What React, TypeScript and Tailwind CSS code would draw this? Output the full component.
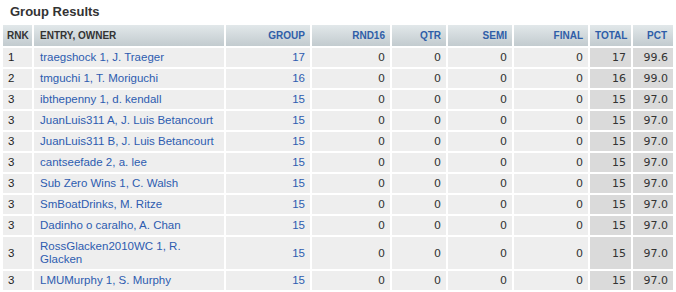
const rows = [
  { rnk: "1", entry: "traegshock 1, J. Traeger", group: 17, total: 17, pct: "99.6" },
  { rnk: "2", entry: "tmguchi 1, T. Moriguchi", group: 16, total: 16, pct: "99.0" },
  { rnk: "3", entry: "ibthepenny 1, d. kendall", group: 15, total: 15, pct: "97.0" },
  { rnk: "3", entry: "JuanLuis311 A, J. Luis Betancourt", group: 15, total: 15, pct: "97.0" },
  { rnk: "3", entry: "JuanLuis311 B, J. Luis Betancourt", group: 15, total: 15, pct: "97.0" },
  { rnk: "3", entry: "cantseefade 2, a. lee", group: 15, total: 15, pct: "97.0" },
  { rnk: "3", entry: "Sub Zero Wins 1, C. Walsh", group: 15, total: 15, pct: "97.0" },
  { rnk: "3", entry: "SmBoatDrinks, M. Ritze", group: 15, total: 15, pct: "97.0" },
  { rnk: "3", entry: "Dadinho o caralho, A. Chan", group: 15, total: 15, pct: "97.0" },
  { rnk: "3", entry: "RossGlacken2010WC 1, R. Glacken", group: 15, total: 15, pct: "97.0" },
  { rnk: "3", entry: "LMUMurphy 1, S. Murphy", group: 15, total: 15, pct: "97.0" },
];

const helv = "font-['Liberation_Sans',Arial,sans-serif]";
const verd = "font-['DejaVu_Sans',Verdana,sans-serif]";

const th =
  "h-[21px] px-[5px] py-0 text-[10px] font-bold leading-[12px] bg-gradient-to-b from-[#e2e8ea] to-[#c2cbcf]";
const td = "h-[19px] py-[3px] leading-[13px] align-middle";

export default function App() {
  return (
    <div className={`w-[676px] h-[292px] overflow-hidden bg-white ${helv}`}>
      <div className="pl-[10px] pt-[4px] mb-[3px] text-[13px] font-bold leading-[16px] text-[#333]">
        Group Results
      </div>
      <table className="ml-[1px] table-fixed border-separate border-spacing-[2px] w-[674px]">
        <colgroup>
          <col className="w-[29px]" />
          <col className="w-[190px]" />
          <col className="w-[84px]" />
          <col className="w-[78px]" />
          <col className="w-[54px]" />
          <col className="w-[64px]" />
          <col className="w-[74px]" />
          <col className="w-[41px]" />
          <col className="w-[40px]" />
        </colgroup>
        <thead>
          <tr>
            <th className={`${th} text-left pl-[4px] text-[#333]`}>RNK</th>
            <th className={`${th} text-left pl-[6px] text-[#333]`}>ENTRY, OWNER</th>
            <th className={`${th} text-right text-[#2f5ea8]`}>GROUP</th>
            <th className={`${th} text-right text-[#2f5ea8]`}>RND16</th>
            <th className={`${th} text-right text-[#2f5ea8]`}>QTR</th>
            <th className={`${th} text-right text-[#2f5ea8]`}>SEMI</th>
            <th className={`${th} text-right text-[#2f5ea8]`}>FINAL</th>
            <th className={`${th} text-right text-[#2f5ea8]`}>TOTAL</th>
            <th className={`${th} text-right pr-[6px] text-[#2f5ea8]`}>PCT</th>
          </tr>
        </thead>
        <tbody>
          {rows.map((r, i) => (
            <tr key={i}>
              <td className={`${td} bg-[#eeeeee] pl-[5px] text-[11.5px] text-[#222]`}>{r.rnk}</td>
              <td className={`${td} bg-[#eeeeee] px-[6px] text-[11.5px]`}>
                <a className="text-[#2d5cb0]">{r.entry}</a>
              </td>
              <td className={`${td} bg-[#eeeeee] pr-[5px] text-right text-[11.5px]`}>
                <a className="text-[#2d5cb0]">{r.group}</a>
              </td>
              <td className={`${td} bg-[#eeeeee] pr-[5px] text-right text-[11px] text-[#333] ${verd}`}>0</td>
              <td className={`${td} bg-[#eeeeee] pr-[5px] text-right text-[11px] text-[#333] ${verd}`}>0</td>
              <td className={`${td} bg-[#eeeeee] pr-[5px] text-right text-[11px] text-[#333] ${verd}`}>0</td>
              <td className={`${td} bg-[#eeeeee] pr-[5px] text-right text-[11px] text-[#333] ${verd}`}>0</td>
              <td className={`${td} bg-[#dadada] pr-[5px] text-right text-[11px] text-[#333] ${verd}`}>{r.total}</td>
              <td className={`${td} bg-[#dadada] pr-[5px] text-right text-[11px] text-[#333] ${verd}`}>{r.pct}</td>
            </tr>
          ))}
          <tr>
            <td className="h-[19px] bg-[#eeeeee]"></td>
            <td className="h-[19px] bg-[#eeeeee]"></td>
            <td className="h-[19px] bg-[#eeeeee]"></td>
            <td className="h-[19px] bg-[#eeeeee]"></td>
            <td className="h-[19px] bg-[#eeeeee]"></td>
            <td className="h-[19px] bg-[#eeeeee]"></td>
            <td className="h-[19px] bg-[#eeeeee]"></td>
            <td className="h-[19px] bg-[#dadada]"></td>
            <td className="h-[19px] bg-[#dadada]"></td>
          </tr>
        </tbody>
      </table>
    </div>
  );
}
